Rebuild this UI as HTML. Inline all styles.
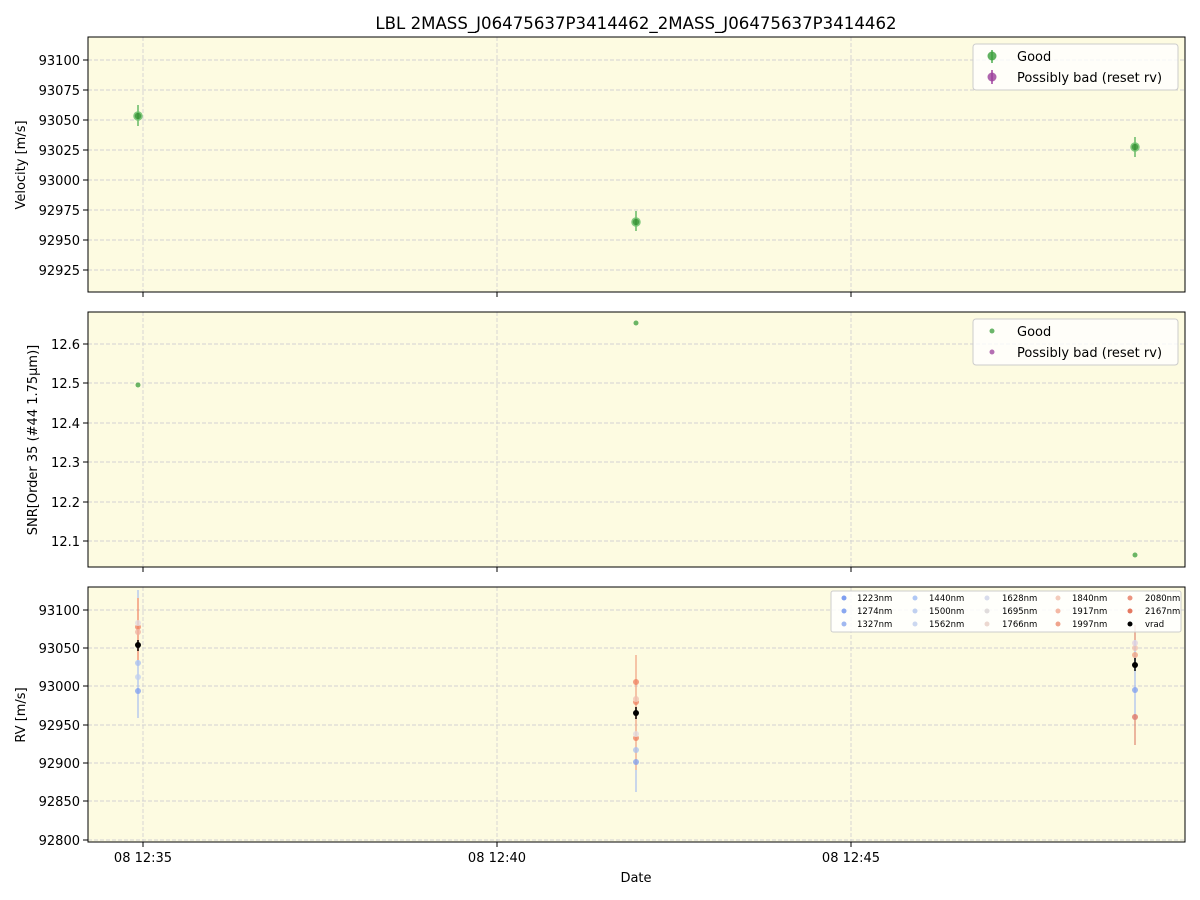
<!DOCTYPE html>
<html><head><style>body{margin:0;background:#fff}svg{display:block}text{font-family:"DejaVu Sans","Liberation Sans",sans-serif;fill:#000}</style></head><body>
<svg width="1200" height="900" xmlns="http://www.w3.org/2000/svg">
<text x="636" y="29" font-size="16.6" text-anchor="middle">LBL 2MASS_J06475637P3414462_2MASS_J06475637P3414462</text>
<!-- panel 1 -->
<rect x="88" y="37" width="1097" height="255" fill="#fdfbe1"/>
<g stroke="#d2d2d2" stroke-dasharray="4,2" stroke-width="0.9">
<line x1="88" x2="1185" y1="60" y2="60"/><line x1="88" x2="1185" y1="90" y2="90"/><line x1="88" x2="1185" y1="120" y2="120"/><line x1="88" x2="1185" y1="150" y2="150"/><line x1="88" x2="1185" y1="180" y2="180"/><line x1="88" x2="1185" y1="210" y2="210"/><line x1="88" x2="1185" y1="240" y2="240"/><line x1="88" x2="1185" y1="270" y2="270"/>
<line x1="143" x2="143" y1="37" y2="292"/><line x1="497" x2="497" y1="37" y2="292"/><line x1="851" x2="851" y1="37" y2="292"/>
</g>
<rect x="88" y="37" width="1097" height="255" fill="none" stroke="#000"/>
<g font-size="13" text-anchor="end">
<text x="80" y="65">93100</text><text x="80" y="95">93075</text><text x="80" y="125">93050</text><text x="80" y="155">93025</text><text x="80" y="185">93000</text><text x="80" y="215">92975</text><text x="80" y="245">92950</text><text x="80" y="275">92925</text>
</g>
<g stroke="#000"><line x1="83" x2="88" y1="60" y2="60"/><line x1="83" x2="88" y1="90" y2="90"/><line x1="83" x2="88" y1="120" y2="120"/><line x1="83" x2="88" y1="150" y2="150"/><line x1="83" x2="88" y1="180" y2="180"/><line x1="83" x2="88" y1="210" y2="210"/><line x1="83" x2="88" y1="240" y2="240"/><line x1="83" x2="88" y1="270" y2="270"/>
<line x1="143" x2="143" y1="292" y2="297"/><line x1="497" x2="497" y1="292" y2="297"/><line x1="851" x2="851" y1="292" y2="297"/></g>
<text transform="translate(25,165) rotate(-90)" font-size="13" text-anchor="middle">Velocity [m/s]</text>
<g stroke="#4caf50" stroke-width="1.5" opacity="0.85">
<line x1="138" x2="138" y1="105" y2="126"/><line x1="636" x2="636" y1="211" y2="231"/><line x1="1135" x2="1135" y1="137" y2="157"/></g>
<g fill="#2e8f2e" stroke="#6cc06c" stroke-width="1.5" opacity="0.85"><circle cx="138" cy="116" r="4"/><circle cx="636" cy="222" r="4"/><circle cx="1135" cy="147" r="4"/></g>
<rect x="973" y="44" width="205" height="46" rx="3" fill="#fff" fill-opacity="0.8" stroke="#ccc"/>
<line x1="992" x2="992" y1="50" y2="63" stroke="#4caf50" stroke-width="1.5"/><circle cx="992" cy="56" r="4.5" fill="#3a9e3a" opacity="0.8"/>
<line x1="992" x2="992" y1="70" y2="84" stroke="#a040a0" stroke-width="1.5"/><circle cx="992" cy="77" r="4.5" fill="#9b3f9b" opacity="0.8"/>
<text x="1017" y="61" font-size="13">Good</text><text x="1017" y="82" font-size="13">Possibly bad (reset rv)</text>
<!-- panel 2 -->
<rect x="88" y="312" width="1097" height="255" fill="#fdfbe1"/>
<g stroke="#d2d2d2" stroke-dasharray="4,2" stroke-width="0.9">
<line x1="88" x2="1185" y1="344" y2="344"/><line x1="88" x2="1185" y1="383" y2="383"/><line x1="88" x2="1185" y1="423" y2="423"/><line x1="88" x2="1185" y1="462" y2="462"/><line x1="88" x2="1185" y1="502" y2="502"/><line x1="88" x2="1185" y1="541" y2="541"/>
<line x1="143" x2="143" y1="312" y2="567"/><line x1="497" x2="497" y1="312" y2="567"/><line x1="851" x2="851" y1="312" y2="567"/>
</g>
<rect x="88" y="312" width="1097" height="255" fill="none" stroke="#000"/>
<g font-size="13" text-anchor="end">
<text x="80" y="349">12.6</text><text x="80" y="388">12.5</text><text x="80" y="428">12.4</text><text x="80" y="467">12.3</text><text x="80" y="507">12.2</text><text x="80" y="546">12.1</text></g>
<g stroke="#000"><line x1="83" x2="88" y1="344" y2="344"/><line x1="83" x2="88" y1="383" y2="383"/><line x1="83" x2="88" y1="423" y2="423"/><line x1="83" x2="88" y1="462" y2="462"/><line x1="83" x2="88" y1="502" y2="502"/><line x1="83" x2="88" y1="541" y2="541"/>
<line x1="143" x2="143" y1="567" y2="572"/><line x1="497" x2="497" y1="567" y2="572"/><line x1="851" x2="851" y1="567" y2="572"/></g>
<text transform="translate(37,440) rotate(-90)" font-size="13" text-anchor="middle">SNR[Order 35 (#44 1.75μm)]</text>
<g fill="#3a9e3a" opacity="0.75"><circle cx="138" cy="385" r="2.5"/><circle cx="636" cy="323" r="2.5"/><circle cx="1135" cy="555" r="2.5"/></g>
<rect x="973" y="319" width="205" height="46" rx="3" fill="#fff" fill-opacity="0.8" stroke="#ccc"/>
<circle cx="992" cy="331" r="2.5" fill="#3a9e3a" opacity="0.75"/><circle cx="992" cy="352" r="2.5" fill="#9b3f9b" opacity="0.75"/>
<text x="1017" y="336" font-size="13">Good</text><text x="1017" y="357" font-size="13">Possibly bad (reset rv)</text>
<!-- panel 3 -->
<rect x="88" y="587" width="1097" height="255" fill="#fdfbe1"/>
<g stroke="#d2d2d2" stroke-dasharray="4,2" stroke-width="0.9">
<line x1="88" x2="1185" y1="610" y2="610"/><line x1="88" x2="1185" y1="648" y2="648"/><line x1="88" x2="1185" y1="686" y2="686"/><line x1="88" x2="1185" y1="725" y2="725"/><line x1="88" x2="1185" y1="763" y2="763"/><line x1="88" x2="1185" y1="801" y2="801"/><line x1="88" x2="1185" y1="840" y2="840"/>
<line x1="143" x2="143" y1="587" y2="842"/><line x1="497" x2="497" y1="587" y2="842"/><line x1="851" x2="851" y1="587" y2="842"/>
</g>
<g font-size="13" text-anchor="end">
<text x="80" y="615">93100</text><text x="80" y="653">93050</text><text x="80" y="691">93000</text><text x="80" y="730">92950</text><text x="80" y="768">92900</text><text x="80" y="806">92850</text><text x="80" y="845">92800</text></g>
<g stroke="#000"><line x1="83" x2="88" y1="610" y2="610"/><line x1="83" x2="88" y1="648" y2="648"/><line x1="83" x2="88" y1="686" y2="686"/><line x1="83" x2="88" y1="725" y2="725"/><line x1="83" x2="88" y1="763" y2="763"/><line x1="83" x2="88" y1="801" y2="801"/><line x1="83" x2="88" y1="840" y2="840"/>
<line x1="143" x2="143" y1="842" y2="847"/><line x1="497" x2="497" y1="842" y2="847"/><line x1="851" x2="851" y1="842" y2="847"/></g>
<text transform="translate(25,715) rotate(-90)" font-size="13" text-anchor="middle">RV [m/s]</text>
<g stroke-width="2" opacity="0.6">
<line x1="138" x2="138" y1="590" y2="718" stroke="#a8bff0"/><line x1="138" x2="138" y1="598" y2="660" stroke="#f08060"/>
<line x1="636" x2="636" y1="655" y2="792" stroke="#a8bff0"/><line x1="636" x2="636" y1="655" y2="770" stroke="#f0a080"/>
<line x1="1135" x2="1135" y1="625" y2="745" stroke="#e08870"/><line x1="1135" x2="1135" y1="640" y2="720" stroke="#a8bff0"/>
</g>
<g opacity="0.75">
<circle cx="138" cy="691" r="3" fill="#7f9ff0"/><circle cx="138" cy="677" r="3" fill="#c0d0f0"/><circle cx="138" cy="663" r="3" fill="#a8bff0"/><circle cx="138" cy="627" r="3" fill="#f08060"/><circle cx="138" cy="623" r="3" fill="#e0d8e0"/><circle cx="138" cy="632" r="3" fill="#f0b0a0"/>
<circle cx="636" cy="762" r="3" fill="#7f9ff0"/><circle cx="636" cy="750" r="3" fill="#a8bff0"/><circle cx="636" cy="738" r="3" fill="#f08060"/><circle cx="636" cy="734" r="3" fill="#e0d8e0"/><circle cx="636" cy="702" r="3" fill="#f08060"/><circle cx="636" cy="699" r="3" fill="#f0c0b0"/><circle cx="636" cy="682" r="3" fill="#f08060"/>
<circle cx="1135" cy="690" r="3" fill="#7f9ff0"/><circle cx="1135" cy="717" r="3" fill="#e07060"/><circle cx="1135" cy="655" r="3" fill="#f0a080"/><circle cx="1135" cy="648" r="3" fill="#f0c0b0"/><circle cx="1135" cy="643" r="3" fill="#e0d0e0"/>
</g>
<g stroke="#000" stroke-width="1.5"><line x1="138" x2="138" y1="640" y2="651"/><line x1="636" x2="636" y1="707" y2="719"/><line x1="1135" x2="1135" y1="658" y2="671"/></g>
<g fill="#000"><circle cx="138" cy="645" r="3"/><circle cx="636" cy="713" r="3"/><circle cx="1135" cy="665" r="3"/></g>
<rect x="88" y="587" width="1097" height="255" fill="none" stroke="#000"/>
<rect x="831" y="591" width="350" height="41" rx="2" fill="#fff" fill-opacity="0.85" stroke="#ccc"/>
<g font-size="8.5">
<circle cx="844" cy="598" r="2.5" fill="#7f9ff0"/><text x="857" y="601">1223nm</text>
<circle cx="844" cy="611" r="2.5" fill="#8aa8f0"/><text x="857" y="614">1274nm</text>
<circle cx="844" cy="624" r="2.5" fill="#a0b8f0"/><text x="857" y="627">1327nm</text>
<circle cx="915" cy="598" r="2.5" fill="#b0c8f5"/><text x="929" y="601">1440nm</text>
<circle cx="915" cy="611" r="2.5" fill="#c0d0f0"/><text x="929" y="614">1500nm</text>
<circle cx="915" cy="624" r="2.5" fill="#ccd8f0"/><text x="929" y="627">1562nm</text>
<circle cx="987" cy="598" r="2.5" fill="#d8dcec"/><text x="1002" y="601">1628nm</text>
<circle cx="987" cy="611" r="2.5" fill="#e0dcdc"/><text x="1002" y="614">1695nm</text>
<circle cx="987" cy="624" r="2.5" fill="#ecd8d0"/><text x="1002" y="627">1766nm</text>
<circle cx="1058" cy="598" r="2.5" fill="#f4ccbc"/><text x="1072" y="601">1840nm</text>
<circle cx="1058" cy="611" r="2.5" fill="#f4b8a4"/><text x="1072" y="614">1917nm</text>
<circle cx="1058" cy="624" r="2.5" fill="#f0a48c"/><text x="1072" y="627">1997nm</text>
<circle cx="1130" cy="598" r="2.5" fill="#ec9480"/><text x="1145" y="601">2080nm</text>
<circle cx="1130" cy="611" r="2.5" fill="#e47860"/><text x="1145" y="614">2167nm</text>
<circle cx="1130" cy="624" r="2.5" fill="#000"/><text x="1145" y="627">vrad</text>
</g>
<g font-size="13" text-anchor="middle"><text x="143" y="862">08 12:35</text><text x="497" y="862">08 12:40</text><text x="851" y="862">08 12:45</text><text x="636" y="882">Date</text></g>
</svg>
</body></html>
